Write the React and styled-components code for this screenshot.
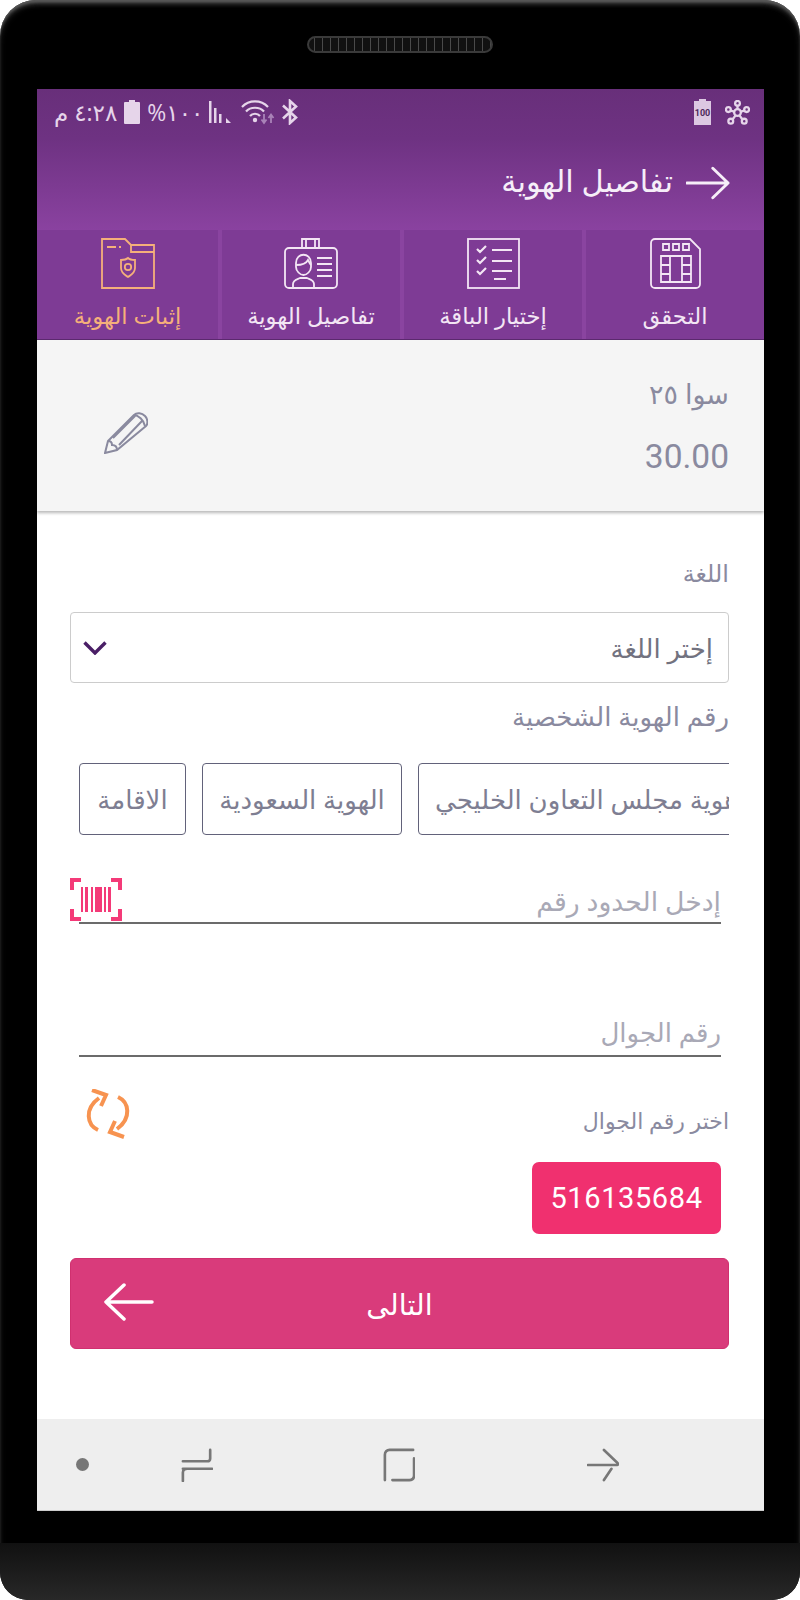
import React from 'react'
import styled, { createGlobalStyle } from 'styled-components'

const arabic = '"Open Sans", "Noto Sans", "DejaVu Sans", sans-serif'

const GlobalStyle = createGlobalStyle`
  html, body {
    margin: 0;
    padding: 0;
    background: #fff;
  }
  * {
    box-sizing: border-box;
  }
`

const Phone = styled.div`
  width: 800px;
  height: 1600px;
  background: #000;
  border-radius: 36px 36px 28px 28px;
  display: flex;
  flex-direction: column;
  overflow: hidden;
  box-shadow: inset 0 3px 3px -1px #5a5a5a, inset 2px 6px 8px -6px #666, inset -2px 6px 8px -6px #666;
`
const Earpiece = styled.div`
  height: 89px;
  padding-top: 36px;
  display: flex;
  justify-content: center;
  align-items: flex-start;
`
const Speaker = styled.div`
  width: 186px;
  height: 17px;
  border-radius: 9px;
  border: 2px solid #3a3a3a;
  background: repeating-linear-gradient(90deg, #111 0 5px, #4a4a4a 5px 6px, #111 6px 8px);
`
const Screen = styled.div`
  width: 727px;
  height: 1422px;
  margin-left: 37px;
  background: #fff;
  display: flex;
  flex-direction: column;
  font-family: ${arabic};
`
const Chin = styled.div`
  height: 89px;
  display: flex;
  flex-direction: column;
  justify-content: flex-end;
`
const ChinBar = styled.div`
  height: 57px;
  background: linear-gradient(180deg, #111 0%, #1c1c1c 50%, #282828 100%);
`
const Header = styled.header`
  height: 141px;
  background: linear-gradient(180deg, #682f7a 0%, #6e3282 35%, #8a42a0 100%);
  display: flex;
  flex-direction: column;
`
const StatusBar = styled.div`
  height: 46px;
  padding: 0 14px 0 17px;
  display: flex;
  direction: ltr;
  justify-content: space-between;
  align-items: center;
  color: #e6d5ea;
`
const StatusGroup = styled.div`
  display: flex;
  align-items: center;
  gap: ${(p) => p.$gap || 8}px;
`
const StatusText = styled.span`
  font-size: 23px;
  line-height: 24px;
  letter-spacing: ${(p) => p.$tight || 0}px;
  direction: rtl;
  white-space: nowrap;
`
const TitleRow = styled.div`
  flex: 1;
  padding: 0 34px 0 0;
  display: flex;
  align-items: center;
  gap: 13px;
`
const Title = styled.h1`
  margin: -5px 0 0;
  font-size: 30.500px;
  font-weight: 400;
  color: #f6eef8;
`
const Tabs = styled.nav`
  height: 110px;
  background: #8a44a0;
  display: grid;
  grid-template-columns: 178px 178px 178px 181px;
  column-gap: 4px;
  border-bottom: 1px solid #5d2a70;
`
const Tab = styled.div`
  background: #7e3b95;
  display: flex;
  flex-direction: column;
  align-items: center;
  padding-top: 8px;
  color: ${(p) => (p.$active ? '#f5b07a' : '#f3e6f4')};
`
const TabLabel = styled.span`
  margin-top: 7px;
  font-size: 22.700px;
  line-height: 40px;
  white-space: nowrap;
`
const Summary = styled.section`
  height: 171px;
  background: #f5f5f5;
  box-shadow: 0 2px 3px rgba(0, 0, 0, 0.28);
  padding: 32px 35px 0 67px;
  display: flex;
  justify-content: space-between;
  position: relative;
`
const SummaryInfo = styled.div`
  display: flex;
  flex-direction: column;
  gap: 23px;
  color: #8a8a9f;
`
const PlanName = styled.div`
  font-size: 27px;
  line-height: 44px;
`
const Price = styled.div`
  font-family: Roboto, sans-serif;
  font-size: 33.500px;
  line-height: 36px;
  direction: ltr;
`
const EditIcon = styled.svg`
  width: 44px;
  height: 42px;
  margin-top: 40px;
`
const Form = styled.main`
  flex: 1;
  padding: 0 35px 0 33px;
  display: flex;
  flex-direction: column;
`
const FieldLabel = styled.label`
  display: block;
  margin-top: ${(p) => p.$top}px;
  font-size: ${(p) => p.$size || 26}px;
  line-height: 36px;
  color: #8a8a9f;
`
const Select = styled.div`
  margin-top: 21px;
  height: 71px;
  border: 1px solid #ccc;
  border-radius: 4px;
  padding: 0 15px 0 12px;
  display: flex;
  justify-content: space-between;
  align-items: center;
  font-size: 26px;
  color: #72727f;
`
const ChipRow = styled.div`
  margin-top: 29px;
  padding-left: 9px;
  display: flex;
  direction: ltr;
  gap: 16px;
  overflow: hidden;
`
const Chip = styled.div`
  flex: none;
  height: 72px;
  ${(p) => p.$width && `width: ${p.$width}px;`}
  border: 1px solid #62627a;
  border-radius: 4px;
  padding: 0 16px;
  display: flex;
  align-items: center;
  justify-content: center;
  direction: rtl;
  font-size: 26px;
  color: #7e7e92;
  white-space: nowrap;
`
const UnderlineField = styled.div`
  margin: ${(p) => p.$top}px 8px 0 9px;
  height: ${(p) => p.$height}px;
  border-bottom: 2px solid #6b6b6b;
  display: flex;
  align-items: center;
  justify-content: space-between;
  font-size: ${(p) => p.$size || 26}px;
  color: #a9a9b6;
  position: relative;
`
const ScanIcon = styled.svg`
  position: absolute;
  left: -9px;
  top: -1px;
  width: 52px;
  height: 43px;
`
const PickRow = styled.div`
  margin-top: 31px;
  height: 52px;
  padding-left: 15px;
  display: flex;
  justify-content: space-between;
  align-items: center;
  color: #8a8a9f;
`
const PickLabel = styled.span`
  margin-top: 12px;
  font-size: 22px;
`
const NumberRow = styled.div`
  margin-top: 22px;
  display: flex;
  direction: ltr;
  justify-content: flex-end;
  padding-right: 8px;
`
const NumberButton = styled.div`
  width: 189px;
  height: 72px;
  background: #f0306f;
  border-radius: 7px;
  display: flex;
  align-items: center;
  justify-content: center;
  font-family: Roboto, sans-serif;
  font-size: 29px;
  letter-spacing: 0.6px;
  color: #fff;
`
const NextButton = styled.div`
  margin-top: 24px;
  height: 91px;
  background: #d93b7b;
  border: 1px solid #d0306f;
  border-radius: 6px;
  display: flex;
  align-items: center;
  justify-content: center;
  font-size: 28.500px;
  color: #fff;
  position: relative;
`
const NextIcon = styled.svg`
  position: absolute;
  left: 33px;
  top: 24px;
  width: 50px;
  height: 38px;
`
const BottomNav = styled.footer`
  height: 92px;
  background: #eee;
  border-bottom: 1px solid #ccc;
  direction: ltr;
  padding-left: 39px;
  display: flex;
  align-items: center;
`
const NavDot = styled.span`
  width: 13px;
  height: 13px;
  border-radius: 50%;
  background: #777;
`
const NavIcon = styled.svg`
  width: 32px;
  height: 34px;
  margin-left: ${(p) => p.$left}px;
`

const BackArrow = () => (
  <svg width="44" height="34" viewBox="0 0 46 34" fill="none" stroke="#f6eef8" strokeWidth="3" strokeLinecap="round" strokeLinejoin="round">
    <path d="M1 17h43M28 1.5 44 17 28 32.5" />
  </svg>
)

const Bluetooth = () => (
  <svg width="18" height="26" viewBox="0 0 18 26" fill="none" stroke="#e6d5ea" strokeWidth="2.6">
    <path d="M2 6.5 15 18.5 9 24V2l6 5.5L2 19.5" />
  </svg>
)

const Wifi = () => (
  <svg width="34" height="26" viewBox="0 0 34 26" fill="none">
    <g stroke="#e6d5ea" strokeWidth="2.2">
      <path d="M1 8c7-7.500 19-7.500 26 0M5 12.500c4.500-5 13.500-5 18 0M9 17c2.500-3 7.500-3 10 0" />
    </g>
    <circle cx="14" cy="21" r="2.200" fill="#e6d5ea" />
    <path d="M23 15v8M20.500 20.500 23 24l2.500-3.500M30 24v-8M27.500 19 30 15.500l2.500 3.500" stroke="#a983b8" strokeWidth="1.800" />
  </svg>
)

const Signal = () => (
  <svg width="26" height="24" viewBox="0 0 26 24" fill="#e6d5ea">
    <rect x="0" y="1" width="2.500" height="22" />
    <rect x="5" y="8" width="2.500" height="15" />
    <rect x="10" y="14" width="2.500" height="9" />
    <path d="M17 23v-5l5 5z" />
  </svg>
)

const BatteryFull = () => (
  <svg width="18" height="24" viewBox="0 0 16 24" fill="#e6d5ea">
    <path d="M5 0h6v2h4a1 1 0 0 1 1 1v20a1 1 0 0 1-1 1H1a1 1 0 0 1-1-1V3a1 1 0 0 1 1-1h4z" />
  </svg>
)

const Battery100 = () => (
  <svg width="17" height="26" viewBox="0 0 17 26">
    <path d="M5 0h7v2h5v24H0V2h5z" fill="#dcc8e2" />
    <text x="8.500" y="17" textAnchor="middle" fontFamily="Roboto, sans-serif" fontSize="9" fontWeight="700" fill="#4d2a5c">100</text>
  </svg>
)

const Hub = () => (
  <svg width="25" height="25" viewBox="0 0 26 26" fill="none" stroke="#e6d5ea" strokeWidth="2.400">
    <circle cx="13" cy="13" r="3.500" />
    <circle cx="13" cy="3.500" r="2.500" />
    <circle cx="3.500" cy="10" r="2.500" />
    <circle cx="22.500" cy="10" r="2.500" />
    <circle cx="6" cy="22" r="2.500" />
    <circle cx="20" cy="22" r="2.500" />
    <path d="M13 6v3.500M6 11l3.500 1M20 11l-3.500 1M8 20l3-4M18 20l-3-4" />
  </svg>
)

const SimIcon = () => (
  <svg width="51" height="51" viewBox="0 0 51 51" fill="none" stroke="#f3e6f4" strokeWidth="1.800">
    <path d="M5 1h35l10 10v35a4 4 0 0 1-4 4H5a4 4 0 0 1-4-4V5a4 4 0 0 1 4-4z" />
    <path d="M13 6h6v6h-6zM23 6h6v6h-6zM33 6h6v6h-6z" />
    <path d="M11 18h30v26H11zM20 18v26M32 18v26M11 27h9M11 36h9M32 27h9M32 36h9" />
  </svg>
)

const ChecklistIcon = () => (
  <svg width="53" height="51" viewBox="0 0 53 51" fill="none" stroke="#f3e6f4">
    <rect x="1" y="1" width="51" height="49" strokeWidth="1.800" />
    <path d="M10 11l3 3 6-6M10 22l3 3 6-6M10 33l3 3 6-6" strokeWidth="2.200" />
    <path d="M25 12h20M25 23h20M25 33h20M27 41h12" strokeWidth="2" />
  </svg>
)

const IdIcon = () => (
  <svg width="54" height="51" viewBox="0 0 54 51" fill="none" stroke="#f3e6f4" strokeWidth="1.800">
    <path d="M18 10V1h17v9M22 1v9M31 1v9" />
    <rect x="1" y="10" width="52" height="40" rx="4" />
    <path d="M9 50v-4c0-4 5-5 7-6h7c2 1 7 2 7 6v4" />
    <path d="M12 25c0-11 15-11 15 0v4c0 4-4 8-7.500 8S12 33 12 29z" />
    <path d="M12 27c5 0 10-1 12-5 1 2 2 4 3 5" />
    <path d="M33 20h15M33 26h15M33 32h15M33 38h15" />
  </svg>
)

const FolderIcon = () => (
  <svg width="54" height="51" viewBox="0 0 54 51" fill="none" stroke="#f5b07a" strokeWidth="1.800">
    <path d="M1 1h23l6 6h23v43H1z" />
    <path d="M30 7v7h23" />
    <path d="M6 9h9M18 9h2" strokeWidth="2" />
    <path d="M27 20c2 2 5 2 7 2v8c0 5-4 7-7 9-3-2-7-4-7-9v-8c2 0 5 0 7-2z" />
    <circle cx="27" cy="29" r="3.200" />
  </svg>
)

const Pencil = () => (
  <EditIcon viewBox="0 0 44 42" fill="none" stroke="#8a8a9f" strokeWidth="2">
    <path d="M1 41l3-12L30 3c3-3 8-2 11 1s3 8 1 10L13 38z" />
    <path d="M4 29c3 0 4 2 4 4 3 0 5 2 5 5M9 26 31 4M15 33 38 9M30 3c4 0 10 5 11 11" />
  </EditIcon>
)

const Chevron = () => (
  <svg width="24" height="14" viewBox="0 0 24 14" fill="none" stroke="#4a1f66" strokeWidth="3.400">
    <path d="M1.500 1.500 12 12 22.500 1.500" />
  </svg>
)

const Scan = () => (
  <ScanIcon viewBox="0 0 52 43" fill="none">
    <path d="M11 2H2v10M41 2h9v10M11 41H2V31M41 41h9V31" stroke="#f43a78" strokeWidth="4" />
    <path d="M11 9h2v25h-2zM15 9h3v25h-3zM21 9h2v25h-2zM25 9h7v25h-7zM34 9h2v25h-2zM38 9h3v25h-3z" fill="#f43a78" />
  </ScanIcon>
)

const Refresh = () => (
  <svg width="46" height="50" viewBox="0 0 46 50" fill="none" stroke="#f79350" strokeWidth="4">
    <path d="M13 41C2 36-1 20 14 9" />
    <path d="M7 1l14 5-5 11" />
    <path d="M33 8c11 5 14 21-1 32" />
    <path d="M39 48l-14-5 5-11" />
  </svg>
)

const tabs = [
  { label: 'التحقق', icon: <SimIcon /> },
  { label: 'إختيار الباقة', icon: <ChecklistIcon /> },
  { label: 'تفاصيل الهوية', icon: <IdIcon /> },
  { label: 'إثبات الهوية', icon: <FolderIcon />, active: true },
]

const App = () => (
  <>
    <GlobalStyle />
    <Phone>
      <Earpiece>
        <Speaker />
      </Earpiece>
      <Screen dir="rtl">
        <Header>
          <StatusBar>
            <StatusGroup $gap={6}>
              <StatusText>٤:٢٨ م</StatusText>
              <BatteryFull />
              <StatusText $tight={-1.5}>١٠٠%</StatusText>
              <Signal />
              <Wifi />
              <Bluetooth />
            </StatusGroup>
            <StatusGroup $gap={14}>
              <Battery100 />
              <Hub />
            </StatusGroup>
          </StatusBar>
          <TitleRow>
            <BackArrow />
            <Title>تفاصيل الهوية</Title>
          </TitleRow>
        </Header>
        <Tabs>
          {tabs.map((tab) => (
            <Tab key={tab.label} $active={tab.active}>
              {tab.icon}
              <TabLabel>{tab.label}</TabLabel>
            </Tab>
          ))}
        </Tabs>
        <Summary>
          <SummaryInfo>
            <PlanName>سوا ٢٥</PlanName>
            <Price>30.00</Price>
          </SummaryInfo>
          <Pencil />
        </Summary>
        <Form>
          <FieldLabel $top={44} $size={24}>اللغة</FieldLabel>
          <Select>
            <span>إختر اللغة</span>
            <Chevron />
          </Select>
          <FieldLabel $top={15}>رقم الهوية الشخصية</FieldLabel>
          <ChipRow>
            <Chip $width={107}>الاقامة</Chip>
            <Chip $width={200}>الهوية السعودية</Chip>
            <Chip>هوية مجلس التعاون الخليجي</Chip>
          </ChipRow>
          <UnderlineField $top={44} $height={45} $size={26.7}>
            <span>إدخل الحدود رقم</span>
            <Scan />
          </UnderlineField>
          <UnderlineField $top={85} $height={48}>
            <span>رقم الجوال</span>
          </UnderlineField>
          <PickRow>
            <PickLabel>اختر رقم الجوال</PickLabel>
            <Refresh />
          </PickRow>
          <NumberRow>
            <NumberButton>516135684</NumberButton>
          </NumberRow>
          <NextButton>
            <span>التالى</span>
            <NextIcon viewBox="0 0 50 38" fill="none" stroke="#fff" strokeWidth="3.500" strokeLinecap="round" strokeLinejoin="round">
              <path d="M48 19H2M20 2 2 19l18 17" />
            </NextIcon>
          </NextButton>
        </Form>
        <BottomNav>
          <NavDot />
          <NavIcon $left={92} viewBox="0 0 34 36" fill="none" stroke="#777" strokeWidth="2.800" strokeLinecap="round">
            <path d="M2 14h26c2 0 3-1 3-3V2M2 22h31M33 22H7c-3 0-5 1-5 4v9" />
          </NavIcon>
          <NavIcon $left={170} viewBox="0 0 34 36" fill="none" stroke="#777" strokeWidth="2.800" strokeLinecap="round">
            <path d="M2 34V7c0-3 2-5 5-5h25M33 11v18c0 3-2 5-5 5H10" />
          </NavIcon>
          <NavIcon $left={172} viewBox="0 0 34 36" fill="none" stroke="#777" strokeWidth="2.800" strokeLinecap="round">
            <path d="M1 18h31c1 0 1-1 .5-2L18 2M18 34l8-12" />
          </NavIcon>
        </BottomNav>
      </Screen>
      <Chin>
        <ChinBar />
      </Chin>
    </Phone>
  </>
)

export default App
